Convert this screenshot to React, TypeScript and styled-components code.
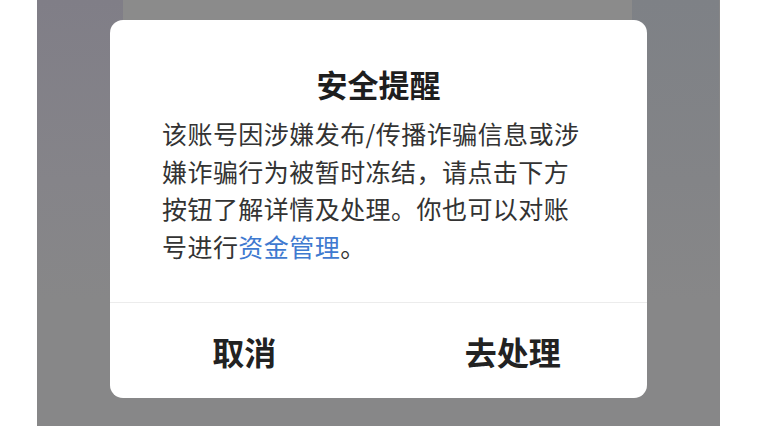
import styled, { createGlobalStyle } from "styled-components";

const GlobalStyle = createGlobalStyle`
  html, body {
    margin: 0;
    padding: 0;
    background: #ffffff;
    font-family: "Noto Sans CJK SC", "Noto Sans", sans-serif;
  }
`;

const Page = styled.div`
  width: 757px;
  height: 426px;
  overflow: hidden;
  background: #ffffff;
`;

const Stage = styled.div`
  margin-left: 37px;
  width: 683px;
  height: 426px;
  padding: 20px 0 0 73px;
  box-sizing: border-box;
  background-color: #878788;
  background-image:
    linear-gradient(180deg, #807e87 0%, #858489 60%, #878788 100%),
    linear-gradient(180deg, #7e8186 0%, #838487 60%, #878788 100%),
    linear-gradient(180deg, #8b8b8b 0%, #8b8b8b 100%);
  background-size: 86px 300px, 87px 300px, 510px 30px;
  background-position: 0 0, 595px 0, 86px 0;
  background-repeat: no-repeat;
`;

const Dialog = styled.div`
  width: 537px;
  height: 378px;
  background: #ffffff;
  border-radius: 13px;
  display: flex;
  flex-direction: column;
  overflow: hidden;
`;

const Content = styled.div`
  padding: 44px 52px 37px 52px;
`;

const Title = styled.h2`
  margin: 0 0 11px 0;
  text-align: center;
  font-size: 31px;
  line-height: 40px;
  font-weight: 700;
  color: #1e1e1e;
`;

const Body = styled.p`
  margin: 0;
  font-size: 25px;
  line-height: 37.5px;
  letter-spacing: 0.45px;
  color: #333333;
  white-space: nowrap;
`;

const Link = styled.span`
  color: #3f7ad0;
`;

const Divider = styled.div`
  height: 1px;
  background: #ececec;
`;

const Actions = styled.div`
  flex: 1;
  display: grid;
  grid-template-columns: 1fr 1fr;
`;

const ActionButton = styled.button`
  border: 0;
  background: transparent;
  font-family: inherit;
  font-size: 32px;
  font-weight: 700;
  color: #222222;
  padding: 0;
  display: flex;
  align-items: center;
  justify-content: center;
`;

export default function App() {
  return (
    <>
      <GlobalStyle />
      <Page>
        <Stage>
          <Dialog>
            <Content>
              <Title>安全提醒</Title>
              <Body>
                该账号因涉嫌发布/传播诈骗信息或涉
                <br />
                嫌诈骗行为被暂时冻结，请点击下方
                <br />
                按钮了解详情及处理。你也可以对账
                <br />
                号进行<Link>资金管理</Link>。
              </Body>
            </Content>
            <Divider />
            <Actions>
              <ActionButton>取消</ActionButton>
              <ActionButton>去处理</ActionButton>
            </Actions>
          </Dialog>
        </Stage>
      </Page>
    </>
  );
}
